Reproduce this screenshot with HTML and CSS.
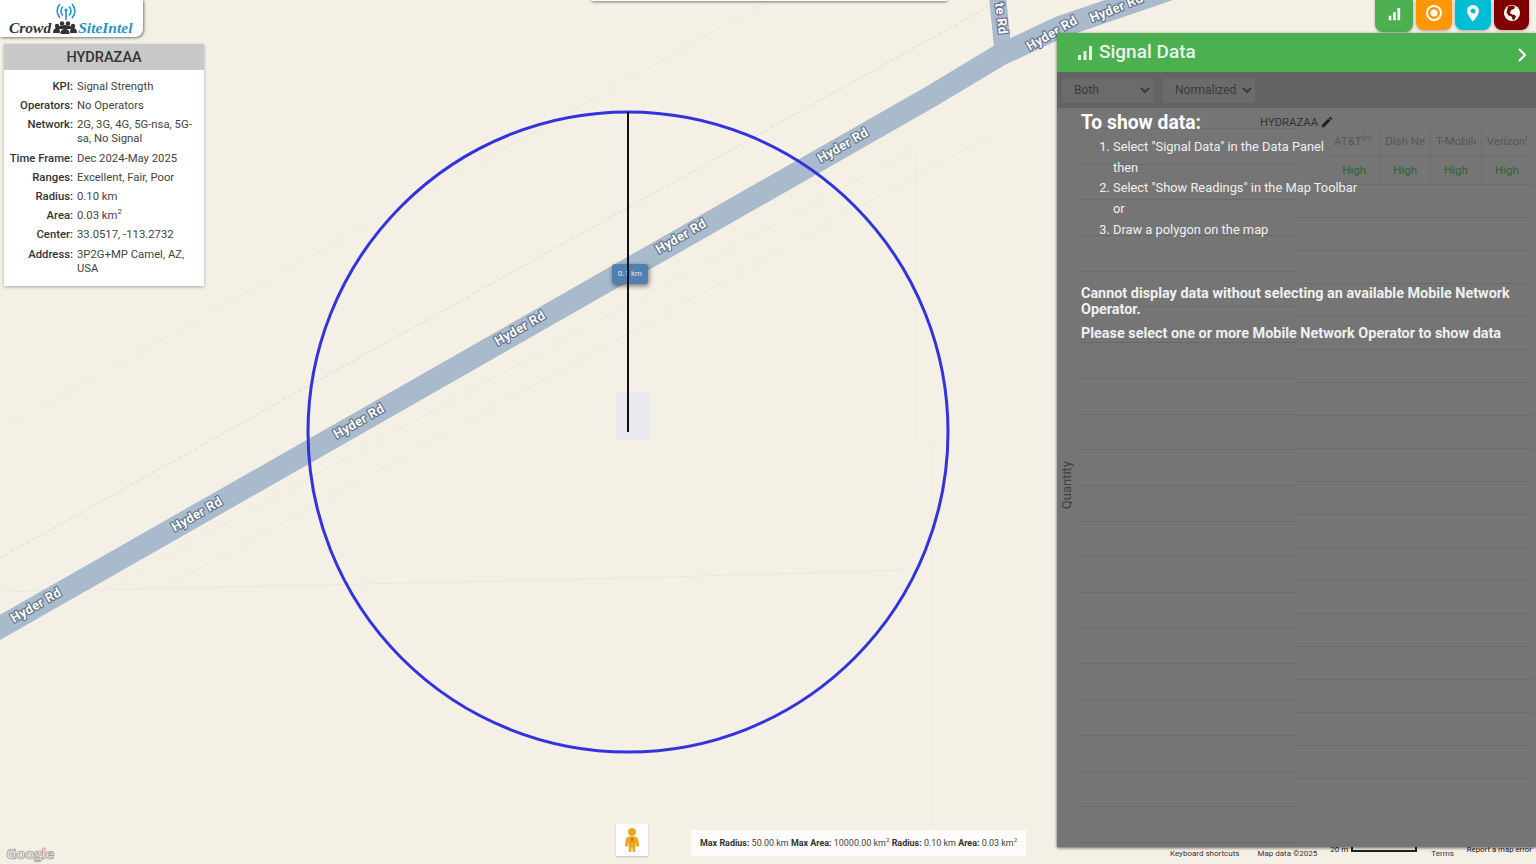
FILE: index.html
```html
<!DOCTYPE html>
<html lang="en">

<head>
    <meta charset="UTF-8">
    <meta name="viewport" content="width=device-width, initial-scale=1.0">
    <title>CrowdSiteIntel</title>
    <link rel="stylesheet" href="styles.css">
</head>

<body>
    <div id="app">
        <!-- map canvas -->
        <svg class="map" viewBox="0 0 1536 864" width="1536" height="864">
            <g class="faint">
                <path d="M0 430 L770 0" />
                <path d="M100 592 L916 148" />
                <path d="M0 592 C300 585 600 580 905 570" />
                <path d="M916 150 L916 443 L931 443 L931 830" />
                <path d="M160 590 L1000 130" />
            </g>
            <path class="rail" d="M0 558 L1000 0" />
            <path class="road side" d="M1003 52 L997 -8" />
            <path class="road" d="M-8 632 L930 97 L1000 55 L1060 27 L1180 -14" />
            <g class="road-label">
                <text transform="translate(38 609) rotate(-30)">Hyder Rd</text>
                <text transform="translate(199 518) rotate(-30)">Hyder Rd</text>
                <text transform="translate(361 425) rotate(-30)">Hyder Rd</text>
                <text transform="translate(522 332) rotate(-30)">Hyder Rd</text>
                <text transform="translate(683 240) rotate(-30)">Hyder Rd</text>
                <text transform="translate(845 149) rotate(-30)">Hyder Rd</text>
                <text transform="translate(1054 37) rotate(-30)">Hyder Rd</text>
                <text transform="translate(1118 12) rotate(-22)">Hyder Rd</text>
                <text transform="translate(997 19) rotate(83)" text-anchor="middle">te Rd</text>
            </g>
            <rect class="center-box" x="616" y="392" width="33" height="48" />
            <circle class="radius-circle" cx="628" cy="432" r="320" />
        </svg>

        <div class="top-sliver"></div>

        <div class="radius-tag">0.1 km</div>
        <div class="radius-line"></div>

        <!-- logo -->
        <div class="logo">
            <svg class="logo-signal" viewBox="0 0 22 18" width="22" height="18">
                <path d="M8 3.5a6 6 0 0 0 0 9M14 3.5a6 6 0 0 1 0 9M5 1a10 10 0 0 0 0 14M17 1a10 10 0 0 1 0 14" />
                <circle cx="11" cy="7" r="1.6" />
                <path d="M11 8v9" />
            </svg>
            <div class="logo-name">
                <span>Crowd</span>
                <svg viewBox="0 0 26 14" width="26" height="14">
                    <circle cx="5" cy="6" r="2.2" />
                    <circle cx="10" cy="3.5" r="2.2" />
                    <circle cx="16" cy="3.5" r="2.2" />
                    <circle cx="21" cy="6" r="2.2" />
                    <circle cx="13" cy="7" r="2.2" />
                    <path d="M1 13c0-4 2-5 4-5s3 1 3 5zM6 9c0-3 2-3.500 4-3.500s3 .5 3 3.500zM13 9c0-3 1-3.500 3-3.500s4 .5 4 3.500zM18 13c0-4 1-5 3-5s4 1 4 5zM8.500 14c0-4 2-5 4.500-5s4.500 1 4.500 5z" />
                </svg>
                <span class="logo-blue">SiteIntel</span>
            </div>
        </div>

        <!-- info card -->
        <div class="info-card">
            <div class="info-title">HYDRAZAA</div>
            <dl class="info-rows">
                <dt>KPI:</dt>
                <dd>Signal Strength</dd>
                <dt>Operators:</dt>
                <dd>No Operators</dd>
                <dt>Network:</dt>
                <dd>2G, 3G, 4G, 5G-nsa, 5G-sa, No Signal</dd>
                <dt>Time Frame:</dt>
                <dd>Dec 2024-May 2025</dd>
                <dt>Ranges:</dt>
                <dd>Excellent, Fair, Poor</dd>
                <dt>Radius:</dt>
                <dd>0.10 km</dd>
                <dt>Area:</dt>
                <dd>0.03 km<sup>2</sup></dd>
                <dt>Center:</dt>
                <dd>33.0517, -113.2732</dd>
                <dt>Address:</dt>
                <dd>3P2G+MP Camel, AZ, USA</dd>
            </dl>
        </div>

        <!-- toolbar -->
        <div class="toolbar">
            <button class="tool tool-green">
                <svg viewBox="0 0 16 16" width="16" height="16">
                    <path d="M2 10h3v5H2zM7 6h3v9H7zM12 1h3v14h-3z" />
                </svg>
            </button>
            <button class="tool tool-orange">
                <svg viewBox="0 0 18 18" width="18" height="18">
                    <path fill-rule="evenodd" d="M9 1a8 8 0 1 0 0 16A8 8 0 0 0 9 1zm0 2a6 6 0 1 1 0 12A6 6 0 0 1 9 3z" />
                    <circle cx="9" cy="9" r="3.500" />
                </svg>
            </button>
            <button class="tool tool-cyan">
                <svg viewBox="0 0 14 18" width="14" height="18">
                    <path fill-rule="evenodd" d="M7 1a6 6 0 0 0-6 6c0 4 6 10.500 6 10.500S13 11 13 7a6 6 0 0 0-6-6zm0 3.500a2.500 2.500 0 1 1 0 5 2.500 2.500 0 0 1 0-5z" />
                </svg>
            </button>
            <button class="tool tool-red">
                <svg viewBox="0 0 18 18" width="18" height="18">
                    <circle cx="9" cy="9" r="8" />
                    <path class="land" d="M5 2.500l4-1 3 1-1 2.500-3 1-1 3 2 1.500 3 .5 1 2-2 3-1.500-.5-1-3-3-1-2-3z" />
                </svg>
            </button>
        </div>

        <!-- map bottom controls -->
        <div class="pegman">
            <svg viewBox="0 0 18 28" width="16" height="26">
                <circle cx="9" cy="5" r="4.500" />
                <path d="M5 10h8l3 3 1 8-3 .5-1-5-.5 11H10l-1-7-1 7H5.500L5 16.500l-1 5-3-.5 1-8z" />
                <path class="pegman-tie" d="M9 10l1.500 3L9 17l-1.500-4z" />
            </svg>
        </div>

        <div class="radius-stats">
            <b>Max Radius:</b> 50.00 km <b>Max Area:</b> 10000.00 km<sup>2</sup>
            <b>Radius:</b> 0.10 km <b>Area:</b> 0.03 km<sup>2</sup>
        </div>

        <div class="google-mark">Google</div>

        <div class="attribution">
            <span class="att-keys">Keyboard shortcuts</span>
            <span class="att-data">Map data ©2025</span>
            <span class="att-up att-scale">20 m</span>
            <span class="scale-bar"></span>
            <span class="att-terms">Terms</span>
            <span class="att-up att-report">Report a map error</span>
        </div>

        <!-- side panel -->
        <section class="panel">
            <header class="panel-head">
                <svg viewBox="0 0 16 16" width="16" height="16">
                    <path d="M1 10h3v5H1zM6.500 6h3v9h-3zM12 1h3v14h-3z" />
                </svg>
                <h2>Signal Data</h2>
                <svg class="chevron" viewBox="0 0 10 14" width="10" height="14">
                    <path d="M2 1l6 6-6 6" />
                </svg>
            </header>

            <div class="panel-filters">
                <select class="filter filter-both">
                    <option>Both</option>
                </select>
                <select class="filter filter-norm">
                    <option>Normalized</option>
                </select>
            </div>

            <div class="panel-body">
                <div class="axis-label">Quantity</div>
                <div class="plot plot-left"></div>
                <div class="plot-right">
                    <div class="plot-title">
                        HYDRAZAA
                        <svg viewBox="0 0 14 14" width="12" height="12">
                            <path d="M1 10.500V13h2.500L11 5.500 8.500 3zM12.800 3.700a.7.7 0 0 0 0-1L11.300 1.200a.7.7 0 0 0-1 0L9.200 2.300l2.500 2.500z" />
                        </svg>
                    </div>
                    <table class="ops">
                        <tr>
                            <th><div class="cell">AT&amp;T<sup>(n)</sup></div></th>
                            <th><div class="cell">Dish Network</div></th>
                            <th><div class="cell">T-Mobile</div></th>
                            <th><div class="cell">Verizon<sup>(n)</sup></div></th>
                        </tr>
                        <tr>
                            <td>High</td>
                            <td>High</td>
                            <td>High</td>
                            <td>High</td>
                        </tr>
                    </table>
                    <div class="plot plot-grid"></div>
                </div>

                <div class="message">
                    <h3>To show data:</h3>
                    <ol>
                        <li>Select "Signal Data" in the Data Panel<br>then</li>
                        <li>Select "Show Readings" in the Map Toolbar<br>or</li>
                        <li>Draw a polygon on the map</li>
                    </ol>
                    <p class="first">Cannot display data without selecting an available Mobile Network Operator.</p>
                    <p>Please select one or more Mobile Network Operator to show data</p>
                </div>
            </div>
        </section>
    </div>
</body>

</html>
```

FILE: styles.css
```css
* {
    margin: 0;
    padding: 0;
    box-sizing: border-box;
    font-family: 'Roboto', sans-serif;
}

body {
    overflow: hidden;
}

#app {
    position: relative;
    width: 1536px;
    height: 864px;
    overflow: hidden;
    background-color: #f4f0e6;
}

.map {
    position: absolute;
    top: 0;
    left: 0;
}

.faint path {
    fill: none;
    stroke: #ece8dd;
    stroke-width: 1;
}

.rail {
    fill: none;
    stroke: #e0dcd3;
    stroke-width: 1;
    stroke-dasharray: 4 2;
}

.road {
    fill: none;
    stroke: #a9bacd;
    stroke-width: 22;
    stroke-linejoin: round;
}

.road.side {
    stroke-width: 17;
}

.road-label text {
    font-size: 13px;
    font-weight: 700;
    fill: #fff;
    stroke: #5d6f86;
    stroke-width: 2.2px;
    paint-order: stroke;
    text-anchor: middle;
    letter-spacing: 0.3px;
}

.center-box {
    fill: #e9e9ef;
}

.radius-circle {
    fill: none;
    stroke: #3333dd;
    stroke-width: 3;
}

.top-sliver {
    position: absolute;
    top: -4px;
    left: 592px;
    width: 355px;
    height: 5px;
    background-color: #fff;
    box-shadow: 0 1px 3px rgba(0, 0, 0, .5);
}

.radius-tag {
    position: absolute;
    top: 264px;
    left: 612px;
    width: 36px;
    height: 20px;
    line-height: 20px;
    text-align: center;
    font-size: 8px;
    color: #dfe8f2;
    background-color: #4f80b4;
    border-radius: 3px;
    box-shadow: 1px 2px 5px rgba(0, 0, 0, .5);
}

.radius-line {
    position: absolute;
    top: 112px;
    left: 627px;
    width: 2px;
    height: 320px;
    background-color: #111;
}

.logo {
    position: absolute;
    top: 0;
    left: 0;
    width: 143px;
    height: 37px;
    padding-left: 9px;
    display: flex;
    flex-direction: column;
    background-color: #fff;
    border-bottom-right-radius: 8px;
    box-shadow: 1px 1px 3px rgba(0, 0, 0, .5);
}

.logo-signal {
    margin: 3px 0 0 46px;
    flex: none;
}

.logo-signal path {
    fill: none;
    stroke: #2a93c5;
    stroke-width: 1.6;
}

.logo-signal circle {
    fill: #2a93c5;
}

.logo-name {
    display: flex;
    align-items: center;
    margin-top: -2px;
    font-size: 15.500px;
}

.logo-name span {
    font-family: 'Liberation Serif', serif;
    font-style: italic;
    font-weight: 700;
    color: #333;
}

.logo-name svg {
    fill: #333;
    margin: -3px 0 0 1px;
}

.logo-name .logo-blue {
    color: #2a93c5;
}

.info-card {
    position: absolute;
    top: 44px;
    left: 4px;
    width: 200px;
    height: 242px;
    background-color: #fff;
    box-shadow: 0 1px 3px rgba(0, 0, 0, .3);
}

.info-title {
    height: 26px;
    line-height: 27px;
    text-align: center;
    font-size: 14.500px;
    font-weight: 500;
    color: #333;
    background-color: #c8c8c8;
}

.info-rows {
    display: grid;
    grid-template-columns: 69px 1fr;
    column-gap: 4px;
    row-gap: 5.200px;
    padding: 10px 8px 0 0;
    font-size: 11.300px;
    line-height: 14px;
    color: #444;
}

.info-rows dt {
    text-align: right;
    font-weight: 500;
    color: #333;
    white-space: nowrap;
}

sup {
    font-size: 70%;
    line-height: 0;
}

.toolbar {
    position: absolute;
    top: 0;
    left: 1375px;
    display: flex;
    align-items: flex-start;
    gap: 3px;
}

.tool {
    width: 36px;
    height: 30px;
    padding-bottom: 4px;
    border: none;
    border-radius: 0 0 8px 8px;
    display: flex;
    align-items: center;
    justify-content: center;
    box-shadow: 0 1px 3px rgba(0, 0, 0, .3);
}

.tool svg {
    fill: #fff;
}

.tool-green {
    width: 38px;
    height: 32px;
    background-color: #4caf50;
}

.tool-green svg {
    width: 14px;
}

.tool-orange {
    background-color: #ff9800;
}

.tool-cyan {
    background-color: #00bcd4;
}

.tool-red {
    width: 35px;
    background-color: #800000;
}

.tool-red .land {
    fill: #800000;
}

.pegman {
    position: absolute;
    top: 824px;
    left: 616px;
    width: 32px;
    height: 32px;
    display: flex;
    align-items: center;
    justify-content: center;
    background-color: #fff;
    box-shadow: 0 1px 2px rgba(0, 0, 0, .2);
}

.pegman svg {
    fill: #e8a820;
}

.pegman .pegman-tie {
    fill: #d9692a;
}

.radius-stats {
    position: absolute;
    top: 830px;
    left: 691px;
    width: 335px;
    height: 26px;
    padding-left: 9px;
    line-height: 26px;
    font-size: 8.950px;
    color: #444;
    white-space: nowrap;
    background-color: rgba(255, 255, 255, .8);
}

.radius-stats b {
    font-weight: 700;
    color: #333;
}

.google-mark {
    position: absolute;
    top: 843px;
    left: 6px;
    font-family: 'Open Sans', sans-serif;
    font-size: 15px;
    font-weight: 700;
    letter-spacing: -0.6px;
    line-height: 20px;
    color: #efefec;
    -webkit-text-stroke: 0.7px #8e8e8a;
}

.attribution {
    position: absolute;
    top: 844px;
    left: 1170px;
    width: 366px;
    height: 20px;
    display: flex;
    font-size: 8px;
    line-height: 20px;
    color: #333;
    white-space: nowrap;
}

.att-up {
    margin-top: -4px;
    color: #222;
}

.att-data {
    margin-left: 18px;
}

.att-scale {
    margin-left: 13px;
}

.scale-bar {
    width: 66px;
    height: 6px;
    margin: 2px 0 0 3px;
    border: 2px solid #222;
    border-top: none;
}

.att-terms {
    margin-left: 14px;
}

.att-report {
    margin-left: 13px;
    font-size: 7.800px;
}

.panel {
    position: absolute;
    top: 33px;
    left: 1057px;
    width: 479px;
    height: 814px;
    display: flex;
    flex-direction: column;
    background-color: #757575;
    box-shadow: 0 1px 3px rgba(0, 0, 0, .6);
}

.panel-head {
    height: 39px;
    flex: none;
    display: flex;
    align-items: center;
    padding-left: 20px;
    color: #e8f5e9;
    background-color: #4caf50;
}

.panel-head svg {
    fill: #e8f5e9;
}

.panel-head h2 {
    margin: -2px 0 0 6px;
    font-size: 19px;
    font-weight: 500;
}

.panel-head .chevron {
    fill: none;
    stroke: #fff;
    stroke-width: 2;
    margin: 5px 9px 0 auto;
}

.panel-filters {
    height: 36px;
    flex: none;
    display: flex;
    align-items: center;
    gap: 10px;
    padding-left: 5px;
    background-color: #636363;
}

.filter {
    height: 25px;
    padding-left: 8px;
    border: none;
    border-radius: 2px;
    font-size: 12px;
    color: #3a3a3a;
    background-color: #6b6b6b;
}

.filter-both {
    width: 91px;
}

.filter-norm {
    width: 92px;
}

.panel-body {
    position: relative;
    flex: 1;
    display: flex;
    padding-left: 23px;
}

.axis-label {
    position: absolute;
    top: 353px;
    left: 3px;
    font-size: 13px;
    line-height: 14px;
    color: #404040;
    writing-mode: vertical-rl;
    transform: rotate(180deg);
}

.plot {
    background-image: repeating-linear-gradient(to bottom, #6a6a6a 0, #6a6a6a 1px, transparent 1px, transparent 35.700px);
}

.plot-left {
    width: 216px;
    height: 716px;
    margin-top: 20px;
}

.plot-right {
    width: 236px;
    display: flex;
    flex-direction: column;
}

.plot-title {
    height: 20px;
    margin-left: -36px;
    display: flex;
    align-items: center;
    gap: 3px;
    padding-top: 8px;
    font-size: 11.300px;
    color: #333;
}

.plot-title svg {
    fill: #222;
}

.ops {
    width: 203px;
    margin-left: 33px;
    table-layout: fixed;
    border-collapse: collapse;
    font-size: 11.500px;
}

.ops th,
.ops td {
    white-space: nowrap;
    text-align: center;
    border-right: 1px solid #6c6c6c;
    border-bottom: 1px solid #6a6a6a;
}

.ops th:last-child,
.ops td:last-child {
    border-right: none;
}

.ops th {
    height: 27px;
    font-weight: 400;
    color: #565656;
    text-align: left;
}

.cell {
    margin: 0 5px;
    overflow: hidden;
}

.ops td {
    height: 29px;
    color: #2b6630;
}

.plot-grid {
    flex: 1;
    margin-bottom: 36px;
    background-image: repeating-linear-gradient(to bottom, transparent 0, transparent 32px, #6a6a6a 32px, #6a6a6a 33px);
}

.message {
    position: absolute;
    top: 0;
    left: 24px;
    width: 440px;
    color: #f0f0f0;
}

.message h3 {
    padding-top: 1px;
    font-size: 19.300px;
    font-weight: 700;
    line-height: 28px;
    color: #fff;
}

.message ol {
    padding-left: 32px;
    font-size: 12.850px;
    line-height: 20.700px;
}

.message p {
    margin-top: 8px;
    font-size: 14.400px;
    font-weight: 700;
    line-height: 16px;
}

.message p.first {
    margin-top: 45px;
}
```
